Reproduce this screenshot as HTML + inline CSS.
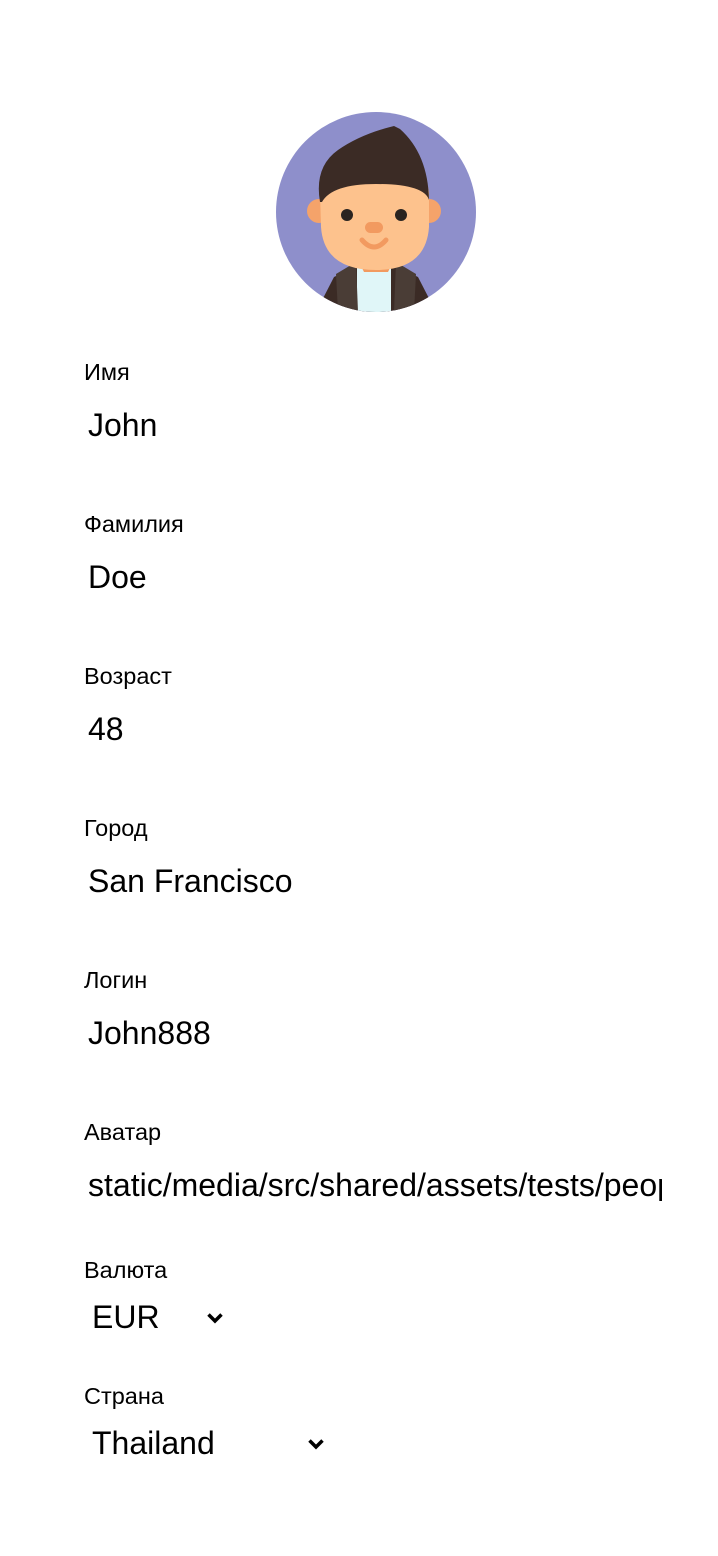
<!DOCTYPE html>
<html><head><meta charset="utf-8"><style>
html,body{margin:0;padding:0;background:#fff;width:718px;height:1556px;overflow:hidden;position:relative;font-family:"Liberation Sans",sans-serif;color:#000}
.l{position:absolute;left:84px;font-size:23.5px;line-height:1;white-space:nowrap}
.v{position:absolute;left:88px;font-size:32px;line-height:1;white-space:nowrap;overflow:hidden}
svg.c{position:absolute}
</style></head><body>
<svg style="position:absolute;left:276px;top:112px" width="200" height="200" viewBox="0 0 200 200">
<defs><clipPath id="cc"><circle cx="100" cy="100" r="100"/></clipPath></defs>
<g clip-path="url(#cc)">
<rect width="200" height="200" fill="#8e8fcb"/>
<path d="M40 200 L58 165 L90 150 L110 150 L142 165 L160 200Z" fill="#3b2b25"/>
<rect x="81" y="152" width="34" height="48" fill="#e0f6f8"/>
<path d="M60 162 L80 150 L82 200 L62 200Z" fill="#4a3d36"/>
<path d="M140 162 L120 150 L118 200 L138 200Z" fill="#4a3d36"/>
<path d="M82 148 L118 148 L112 160 L88 160Z" fill="#f29a60"/>
<circle cx="43" cy="99" r="12" fill="#f5a36a"/>
<circle cx="153" cy="99" r="12" fill="#f5a36a"/>
<path d="M44 80 Q44 55 100 55 Q153 55 153 82 L153 115 Q150 158 100 158 Q48 158 45 115Z" fill="#fdc28d"/>
<path d="M44 90 Q38 55 62 38 Q85 22 118 14 L124 17 Q152 42 153 88 Q148 72 100 72 Q56 72 46 90Z" fill="#3b2b25"/>
<circle cx="71" cy="103" r="6" fill="#2a2420"/>
<circle cx="125" cy="103" r="6" fill="#2a2420"/>
<rect x="89" y="110" width="18" height="11" rx="5.5" fill="#f29a60"/>
<path d="M86 128 Q98 142 110 128" stroke="#f29a60" stroke-width="5" fill="none" stroke-linecap="round"/>
</g></svg>

<div class="l" style="top:361px">Имя</div>
<div class="v" style="top:409px">John</div>
<div class="l" style="top:513px">Фамилия</div>
<div class="v" style="top:561px">Doe</div>
<div class="l" style="top:665px">Возраст</div>
<div class="v" style="top:713px">48</div>
<div class="l" style="top:817px">Город</div>
<div class="v" style="top:865px">San Francisco</div>
<div class="l" style="top:969px">Логин</div>
<div class="v" style="top:1017px">John888</div>
<div class="l" style="top:1121px">Аватар</div>
<div class="v" style="top:1169px;width:574px">static/media/src/shared/assets/tests/people/avatar.png</div>
<div class="l" style="top:1259px">Валюта</div>
<div class="v" style="top:1301px;left:92px">EUR</div>
<svg class="c" style="left:206px;top:1312px" width="18" height="12" viewBox="0 0 18 12"><path d="M2.5 2.5 L9 9 L15.5 2.5" stroke="#000" stroke-width="3.5" fill="none"/></svg>
<div class="l" style="top:1385px">Страна</div>
<div class="v" style="top:1427px;left:92px">Thailand</div>
<svg class="c" style="left:307px;top:1438px" width="18" height="12" viewBox="0 0 18 12"><path d="M2.5 2.5 L9 9 L15.5 2.5" stroke="#000" stroke-width="3.5" fill="none"/></svg>
</body></html>
